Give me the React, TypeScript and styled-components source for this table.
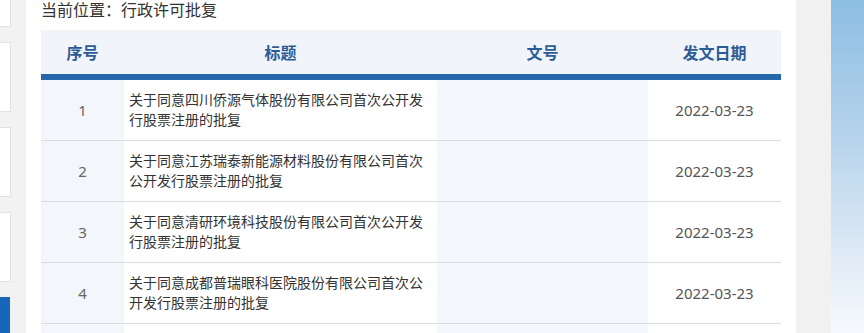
import styled, { createGlobalStyle } from 'styled-components';

const GlobalStyle = createGlobalStyle`
  html, body {
    margin: 0;
    padding: 0;
    background: #f2f2f2;
    font-family: "Noto Sans", "Noto Sans CJK SC", sans-serif;
    overflow: hidden;
  }
`;

interface Approval {
  id: number;
  title: string;
  docNo: string;
  date: string;
}

const approvals: Approval[] = [
  { id: 1, title: '关于同意四川侨源气体股份有限公司首次公开发行股票注册的批复', docNo: '', date: '2022-03-23' },
  { id: 2, title: '关于同意江苏瑞泰新能源材料股份有限公司首次公开发行股票注册的批复', docNo: '', date: '2022-03-23' },
  { id: 3, title: '关于同意清研环境科技股份有限公司首次公开发行股票注册的批复', docNo: '', date: '2022-03-23' },
  { id: 4, title: '关于同意成都普瑞眼科医院股份有限公司首次公开发行股票注册的批复', docNo: '', date: '2022-03-23' },
  { id: 5, title: '', docNo: '', date: '' },
];

const App = () => {
  return (
    <>
      <GlobalStyle />
      <Page>
        <Sidebar>
          <SideCard />
          <SideCard />
          <SideCard />
          <SideCard />
          <SideButton />
        </Sidebar>
        <Main>
          <Breadcrumb>当前位置：行政许可批复</Breadcrumb>
          <Table>
            <colgroup>
              <col style={{ width: 83 }} />
              <col style={{ width: 313 }} />
              <col style={{ width: 211 }} />
              <col style={{ width: 133 }} />
            </colgroup>
            <thead>
              <tr>
                <Th>序号</Th>
                <Th>标题</Th>
                <Th>文号</Th>
                <Th>发文日期</Th>
              </tr>
            </thead>
            <tbody>
              {approvals.map(a => (
                <tr key={a.id}>
                  <NumCell>{a.title ? a.id : ''}</NumCell>
                  <TitleCell>{a.title}</TitleCell>
                  <DocCell>{a.docNo}</DocCell>
                  <DateCell>{a.date}</DateCell>
                </tr>
              ))}
            </tbody>
          </Table>
        </Main>
        <Gutter />
        <Backdrop />
      </Page>
    </>
  );
};

const Page = styled.div`
  display: flex;
  height: 333px;
  overflow: hidden;
`;

const Sidebar = styled.div`
  width: 11px;
  flex-shrink: 0;
  display: flex;
  flex-direction: column;
  gap: 15px;
  margin-top: -43px;
`;

const SideCard = styled.div`
  height: 68px;
  flex-shrink: 0;
  background: #fff;
  border: 1px solid #e2e2e2;
  border-left: none;
`;

const SideButton = styled.div`
  height: 70px;
  width: 10px;
  flex-shrink: 0;
  background: #1866b9;
`;

const Main = styled.div`
  margin-left: 15px;
  width: 740px;
  flex-shrink: 0;
  background: #fff;
  padding: 0 15px;
`;

const Breadcrumb = styled.div`
  font-size: 16px;
  line-height: 20px;
  color: #333;
  margin-bottom: 10px;
`;

const Table = styled.table`
  width: 740px;
  border-collapse: collapse;
  table-layout: fixed;
`;

const Th = styled.th`
  height: 44px;
  padding: 0;
  background: #f1f5fa;
  border-bottom: 6px solid #2468ab;
  color: #2d5b97;
  font-size: 16px;
  font-weight: bold;
  text-align: center;
`;

const Td = styled.td<{ $shaded?: boolean }>`
  height: 60px;
  padding: 0;
  border-bottom: 1px solid #dcdcdc;
  background: ${({ $shaded }) => ($shaded ? '#f3f6fa' : '#fff')};
  vertical-align: middle;
`;

const NumCell = styled(Td).attrs({ $shaded: true })`
  text-align: center;
  color: #666;
  font-size: 15px;
`;

const TitleCell = styled(Td)`
  padding: 0 6px 0 5px;
  color: #333;
  font-size: 14px;
  line-height: 20px;
  text-align: left;
`;

const DocCell = styled(Td).attrs({ $shaded: true })`
  text-align: center;
  color: #555;
  font-size: 14px;
`;

const DateCell = styled(Td)`
  text-align: center;
  color: #555;
  font-size: 15px;
`;

const Gutter = styled.div`
  width: 35px;
  flex-shrink: 0;
  background: #f1f1f1;
`;

const Backdrop = styled.div`
  flex: 1;
  background: linear-gradient(to bottom, #8cbde3 0%, #b5d3ec 40%, #dde9f5 75%, #f7fafd 100%);
`;

export default App;
